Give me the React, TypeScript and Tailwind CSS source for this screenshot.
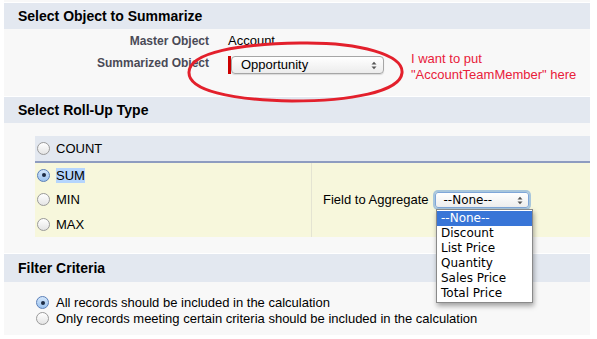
import React from 'react';

const font = "font-['Liberation_Sans',Arial,sans-serif]";
const macFont = "font-['DejaVu_Sans',sans-serif]";

const Radio: React.FC<{ checked?: boolean }> = ({ checked }) => (
  <span
    className={`inline-flex h-[13px] w-[13px] shrink-0 items-center justify-center rounded-full border ${
      checked
        ? 'border-[#5a7fb8] bg-[linear-gradient(#d3e6fb,#9cc3ef)]'
        : 'border-[#9a9a9a] bg-[linear-gradient(#ffffff,#e4e4e4)]'
    }`}
  >
    {checked && <span className="h-[4px] w-[4px] rounded-full bg-[#1c2b44]" />}
  </span>
);

const SectionHeader: React.FC<{ title: string; h: string }> = ({ title, h }) => (
  <div className={`flex items-center border-t border-white bg-[#e3e8f0] pl-[14px] text-[14px] font-bold text-black ${h}`}>
    {title}
  </div>
);

const Arrows = () => (
  <svg width="6" height="9" viewBox="0 0 6 9" className="shrink-0">
    <path d="M0.5 3.5 L3 0.8 L5.5 3.5 Z" fill="#555" />
    <path d="M0.5 5.5 L3 8.2 L5.5 5.5 Z" fill="#555" />
  </svg>
);

const options = ['--None--', 'Discount', 'List Price', 'Quantity', 'Sales Price', 'Total Price'];

export default function App() {
  return (
    <div className={`relative h-[339px] w-[597px] overflow-hidden bg-white ${font}`}>
      <div className="ml-[4px] w-[586px] bg-[#f8f8f8] pt-[2px]">
        {/* Section 1 */}
        <SectionHeader title="Select Object to Summarize" h="h-[27px]" />
        <div className="h-[67px] pt-[3px] text-[13px]">
          <div className="grid grid-cols-[205px_1fr] items-start">
            <div className="h-[18px] text-right text-[12px] font-bold leading-[18px] text-[#4a4a56]">
              Master Object
            </div>
            <div className="pl-[19px] leading-[18px] text-black">Account</div>
            <div className="mt-[6px] text-right text-[12px] font-bold leading-[14px] text-[#4a4a56]">
              Summarized Object
            </div>
            <div className="mt-[6px] flex items-start pl-[19px]">
              <span className="h-[18px] w-[3px] bg-[#c00]" />
              <div className="flex h-[18px] w-[153px] items-center justify-between rounded-[4px] border border-[#a6a6a6] bg-[linear-gradient(#ffffff,#ececec)] pl-[9px] pr-[6px] text-[13px] text-black shadow-[0_1px_1px_rgba(0,0,0,0.12)]">
                <span>Opportunity</span>
                <Arrows />
              </div>
              <div className="ml-[27px] mt-[-5px] text-[13px] leading-[16px] text-[#e8203a]">
                <div>I want to put</div>
                <div>"AccountTeamMember" here</div>
              </div>
            </div>
          </div>
        </div>

        {/* Section 2 */}
        <SectionHeader title="Select Roll-Up Type" h="h-[27px]" />
        <div className="h-[130px] pt-[13px] text-[13px] text-black">
          <div className="ml-[31px]">
            <div className="flex h-[27px] items-center gap-[6px] border-b-2 border-[#8e9cc0] bg-[#e3e8f0] pl-[2px]">
              <Radio />
              <span>COUNT</span>
            </div>
            <div className="flex h-[74px] bg-[#f7f7dc]">
              <div className="w-[277px] border-r border-[#e4e4d2] pl-[2px]">
                <div className="flex h-[24px] items-center gap-[6px]">
                  <Radio checked />
                  <span className="bg-[#b5d5fd] leading-[15px]">SUM</span>
                </div>
                <div className="flex h-[25px] items-center gap-[6px]">
                  <Radio />
                  <span>MIN</span>
                </div>
                <div className="flex h-[25px] items-center gap-[6px]">
                  <Radio />
                  <span>MAX</span>
                </div>
              </div>
              <div className="flex items-start pl-[11px] pt-[29px]">
                <span className="leading-[16px]">Field to Aggregate</span>
                <div className="ml-[6px] flex h-[16px] w-[94px] items-center justify-between rounded-[3px] border border-[#7fa6d8] bg-[linear-gradient(#ffffff,#ededed)] pl-[8px] pr-[5px] text-[12px] shadow-[0_0_0_2px_rgba(104,158,221,0.55)]">
                  <span className={`${macFont} leading-[14px]`}>--None--</span>
                  <Arrows />
                </div>
              </div>
            </div>
          </div>
        </div>

        {/* Section 3 */}
        <SectionHeader title="Filter Criteria" h="h-[29px]" />
        <div className="h-[53px] pt-[13px] text-[13px] leading-[15px] text-black">
          <div className="flex items-center gap-[7px] pl-[32px]">
            <Radio checked />
            <span>All records should be included in the calculation</span>
          </div>
          <div className="mt-[1px] flex items-center gap-[7px] pl-[32px]">
            <Radio />
            <span>Only records meeting certain criteria should be included in the calculation</span>
          </div>
        </div>
      </div>

      {/* open select menu */}
      <div
        className={`absolute left-[436px] top-[209px] w-[97px] border border-[#8a8a8a] bg-white py-[1px] text-[12px] text-black shadow-[1px_3px_5px_rgba(0,0,0,0.35)] ${macFont}`}
      >
        {options.map((o, i) => (
          <div
            key={o}
            className={`h-[15px] pl-[4px] leading-[15px] ${i === 0 ? 'bg-[#3875d7] text-white' : ''}`}
          >
            {o}
          </div>
        ))}
      </div>

      {/* hand-drawn red ellipse */}
      <svg className="pointer-events-none absolute left-0 top-0" width="597" height="339">
        <path
          d="M300 43 C 360 42, 404 55, 402 73 C 400 92, 350 101, 292 101 C 230 100, 188 90, 189 72 C 190 52, 240 44, 300 43 Z"
          fill="none"
          stroke="#e3202c"
          strokeWidth="3"
        />
      </svg>
    </div>
  );
}
